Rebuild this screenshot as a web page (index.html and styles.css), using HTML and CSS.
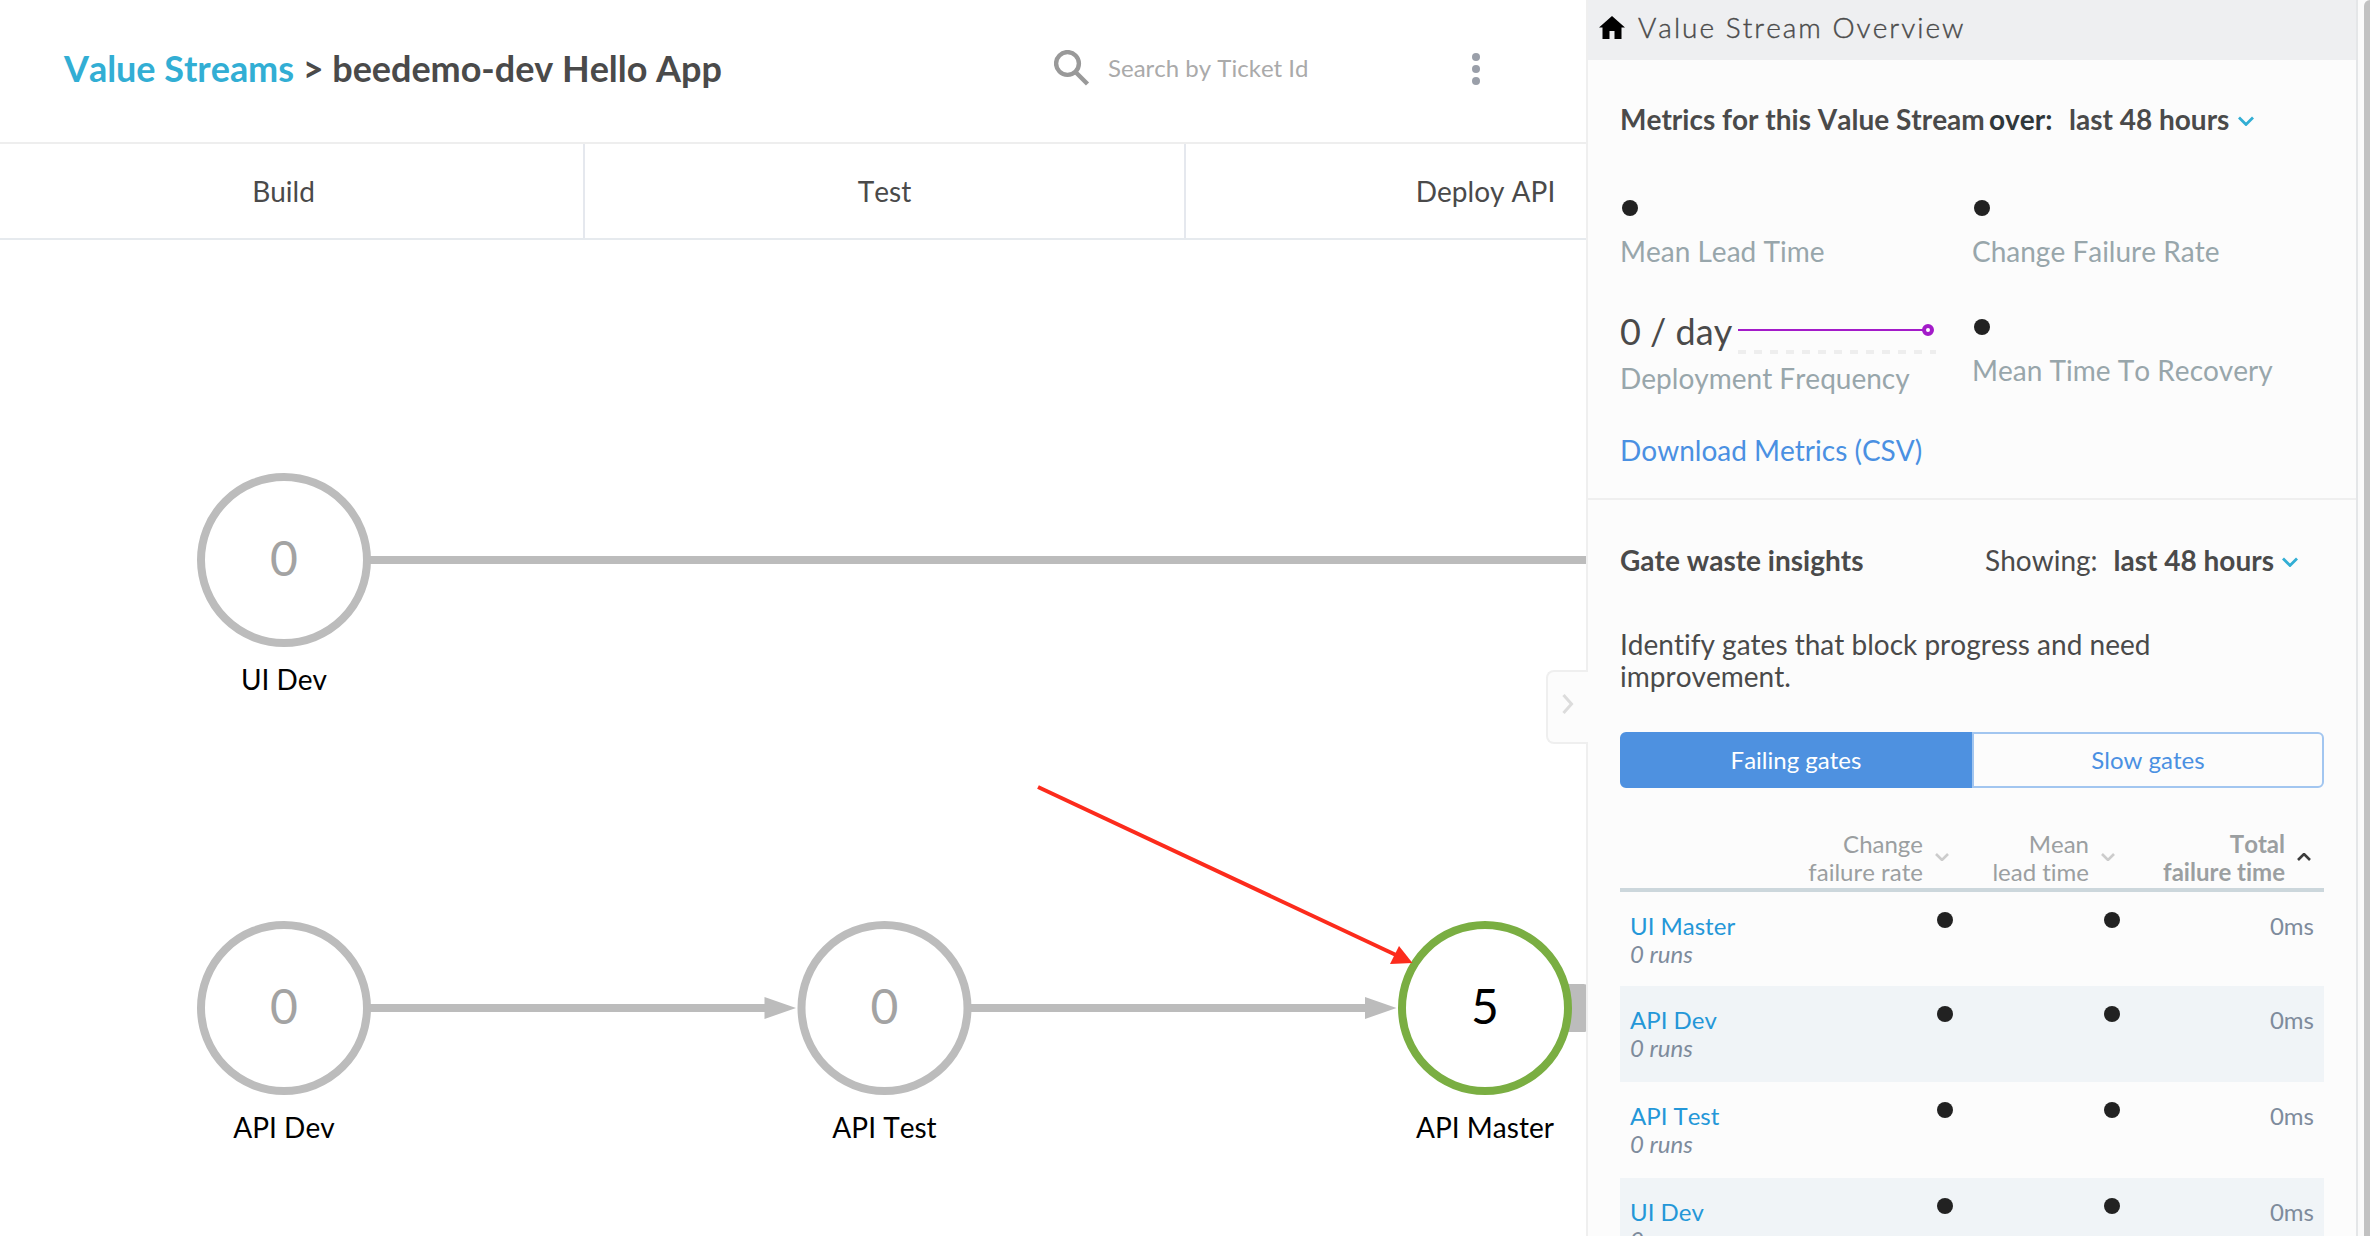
FILE: index.html
```html
<!DOCTYPE html>
<html lang="en">
<head>
<meta charset="utf-8">
<title>Value Streams - beedemo-dev Hello App</title>
<link rel="stylesheet" href="styles.css">
</head>
<body>
<div class="app">
  <main class="stream">
    <header class="topbar">
      <h1 class="title"><a class="title-link">Value Streams</a> &gt; beedemo-dev Hello App</h1>
      <div class="search">
        <svg class="search-icon" width="36" height="36" viewBox="0 0 36 36"><circle cx="13.5" cy="13.5" r="11.4"/><path d="M22 22.500L33.500 34"/></svg>
        <span class="search-text">Search by Ticket Id</span>
      </div>
      <svg class="kebab" width="8" height="32" viewBox="0 0 8 32"><circle cx="4" cy="4" r="4"/><circle cx="4" cy="16" r="4"/><circle cx="4" cy="28" r="4"/></svg>
    </header>
    <div class="phases">
      <div class="phase">Build</div>
      <div class="phase">Test</div>
      <div class="phase">Deploy API</div>
    </div>
    <svg class="canvas" width="1586" height="996" viewBox="0 240 1586 996">
      <g class="links">
        <path d="M284 560H1586M284 1008H766M884.500 1008H1366"/>
        <path class="head" d="M764.500 997L796 1008L764.500 1019ZM1365 997L1396.500 1008L1365 1019Z"/>
        <rect class="head" x="1520" y="984" width="67.500" height="48" rx="4"/>
      </g>
      <g class="node"><circle cx="284" cy="560" r="83"/><text class="count" x="284" y="575.500">0</text><text class="name" x="284" y="690">UI Dev</text></g>
      <g class="node"><circle cx="284" cy="1008" r="83"/><text class="count" x="284" y="1023.500">0</text><text class="name" x="284" y="1138">API Dev</text></g>
      <g class="node"><circle cx="884.500" cy="1008" r="83"/><text class="count" x="884.500" y="1023.500">0</text><text class="name" x="884.500" y="1138">API Test</text></g>
      <g class="node active"><circle cx="1485" cy="1008" r="83"/><text class="count" x="1485" y="1023.500">5</text><text class="name" x="1485" y="1138">API Master</text></g>
      <g class="pointer"><path class="shaft" d="M1038 787L1396 955"/><path class="tip" d="M1399 946L1412.500 963L1390 964Z"/></g>
    </svg>
  </main>
  <aside class="panel">
    <div class="handle"><svg width="12" height="20" viewBox="0 0 12 20"><path d="M1.500 1L9.500 10L1.500 19"/></svg></div>
    <div class="panel-head">
      <svg width="26" height="23" viewBox="0 0 26 23"><path d="M13 0L26 11.500H22.500V23H15.500V15H10.500V23H3.500V11.500H0Z"/></svg>
      <span>Value Stream Overview</span>
    </div>
    <section class="metrics">
      <h2 class="heading"><span class="subject">Metrics for this Value Stream</span><span class="over">over:</span><span class="range">last 48 hours</span><svg class="chev" width="16" height="10" viewBox="0 0 16 10"><path d="M1 1.500L8 8.500L15 1.500"/></svg></h2>
      <div class="grid">
        <div class="metric"><i class="dot"></i><span class="label">Mean Lead Time</span></div>
        <div class="metric"><i class="dot"></i><span class="label">Change Failure Rate</span></div>
        <div class="metric freq">
          <div class="value">0 / day
            <svg class="spark" width="200" height="36" viewBox="0 0 200 36"><path class="dash" d="M0 32H198"/><path class="line" d="M0 10H190"/><circle cx="190" cy="10" r="4"/></svg>
          </div>
          <span class="label">Deployment Frequency</span>
        </div>
        <div class="metric"><i class="dot"></i><span class="label">Mean Time To Recovery</span></div>
      </div>
      <a class="download">Download Metrics (CSV)</a>
    </section>
    <section class="gates">
      <div class="gates-head">
        <h2 class="heading">Gate waste insights</h2>
        <div class="showing"><span>Showing:</span><b>last 48 hours</b><svg class="chev" width="16" height="10" viewBox="0 0 16 10"><path d="M1 1.500L8 8.500L15 1.500"/></svg></div>
      </div>
      <p class="intro">Identify gates that block progress and need improvement.</p>
      <div class="toggle"><div class="tab on">Failing gates</div><div class="tab">Slow gates</div></div>
      <div class="thead">
        <span></span>
        <div class="th">Change<br>failure rate<svg width="14" height="8" viewBox="0 0 14 8"><path d="M1 1L7 7L13 1"/></svg></div>
        <div class="th">Mean<br>lead time<svg width="14" height="8" viewBox="0 0 14 8"><path d="M1 1L7 7L13 1"/></svg></div>
        <div class="th sorted">Total<br>failure time<svg width="14" height="8" viewBox="0 0 14 8"><path d="M1 7L7 1L13 7"/></svg></div>
      </div>
      <div class="rows">
        <div class="row"><div class="gate"><a>UI Master</a><em>0 runs</em></div><i class="dot"></i><i class="dot"></i><span class="total">0ms</span></div>
        <div class="row"><div class="gate"><a>API Dev</a><em>0 runs</em></div><i class="dot"></i><i class="dot"></i><span class="total">0ms</span></div>
        <div class="row"><div class="gate"><a>API Test</a><em>0 runs</em></div><i class="dot"></i><i class="dot"></i><span class="total">0ms</span></div>
        <div class="row"><div class="gate"><a>UI Dev</a><em>0 runs</em></div><i class="dot"></i><i class="dot"></i><span class="total">0ms</span></div>
      </div>
    </section>
  </aside>
  <div class="scroll"><div class="thumb"></div></div>
</div>
</body>
</html>
```
FILE: styles.css
```css
* { box-sizing: border-box; }
body { margin: 0; background: #fff; font-family: Lato, "Liberation Sans", sans-serif; font-size: 28px; font-kerning: none; font-variant-ligatures: none; color: #4a4a4a; }
svg { display: block; fill: none; }
h1, h2, p { margin: 0; }
.app { display: grid; grid-template-columns: 1586px 772px 12px; height: 1236px; overflow: hidden; }

.stream { display: flex; flex-direction: column; overflow: hidden; }
.topbar { display: flex; align-items: center; height: 144px; padding: 0 0 6px 64px; border-bottom: 2px solid #eee; }
.title { width: 990px; font-size: 36px; line-height: 44px; font-weight: 700; letter-spacing: -0.04px; }
.title-link { color: #32aed4; }
.search { display: flex; align-items: center; gap: 18px; width: 418px; }
.search-icon { stroke: #999; stroke-width: 4.4; }
.search-text { font-size: 24px; padding-bottom: 2px; color: #aaa; }
.kebab { fill: #9a9fa9; margin-top: 1px; }
.phases { display: flex; height: 96px; border-bottom: 2px solid #e6eaee; }
.phase { flex: 0 0 601px; display: flex; align-items: center; justify-content: center; padding-bottom: 1px; border-right: 2px solid #e5e8ee; }
.phase:first-child { flex-basis: 585px; padding-right: 16px; }
.canvas { flex: none; }
.links path { stroke: #bcbcbc; stroke-width: 8; }
.links .head { fill: #bcbcbc; stroke: none; }
.node circle { fill: #fff; stroke: #bcbcbc; stroke-width: 8; }
.node text { text-anchor: middle; }
.count { font-size: 48px; fill: #a3a3a3; }
.name { font-size: 28px; fill: #000; }
.active circle { stroke: #7aae42; }
.active .count { fill: #000; }
.shaft { stroke: #fc2b1c; stroke-width: 4; }
.tip { fill: #fc2b1c; }

.panel { position: relative; background: #fcfcfc; border-left: 2px solid #efefef; border-right: 2px solid #e4e6e8; }
.handle { position: absolute; left: -42px; top: 670px; width: 42px; height: 74px; display: flex; align-items: center; padding: 0 0 6px 14px; background: #fcfcfc; border: 2px solid #efefef; border-right: 0; border-radius: 8px 0 0 8px; }
.handle svg { stroke: #dcdcdc; stroke-width: 3; }
.panel-head { display: flex; align-items: center; gap: 13px; height: 60px; padding: 0 0 5px 11px; background: #eeeff1; font-weight: 300; letter-spacing: 2px; }
.panel-head span { padding-bottom: 1px; -webkit-text-stroke: 0.4px #4a4a4a; }
.panel-head svg { fill: #000; }
.metrics { height: 440px; padding: 43px 32px 0; border-bottom: 2px solid #efefef; }
.heading { display: flex; align-items: center; font-size: 28px; line-height: 32px; height: 32px; font-weight: 700; }
.subject { width: 369px; }
.over { color: #30383b; width: 80px; }
.range { margin-right: 9px; }
.chev { stroke: #32aed4; stroke-width: 2.8; margin-top: 4px; }
.grid { display: grid; grid-template-columns: 352px 352px; grid-template-rows: 119px 126px; padding-top: 65px; }
.dot { display: block; width: 16px; height: 16px; border-radius: 50%; background: #222; }
.metric .dot { margin-left: 2px; }
.label { display: block; margin-top: 18px; line-height: 34px; color: #98a6ab; }
.value { display: flex; font-size: 36px; line-height: 44px; height: 44px; margin-top: -10px; white-space: nowrap; }
.value .spark { margin: 11px 0 0 6px; }
.freq .label { margin-top: 8px; }
.spark .line { stroke: #a31bc9; stroke-width: 2.2; }
.spark .dash { stroke: #eee; stroke-width: 4; stroke-dasharray: 8 8; }
.spark circle { fill: #fff; stroke: #a31bc9; stroke-width: 4; }
.download { display: block; line-height: 34px; color: #4a90e2; margin-top: -12px; }

.gates { padding: 44px 32px 0; }
.gates-head { display: flex; justify-content: space-between; height: 32px; padding-right: 26px; }
.showing { display: flex; align-items: center; line-height: 32px; }
.showing b { margin: 0 8px 0 16px; }
.intro { margin-top: 52px; width: 600px; line-height: 32px; }
.toggle { display: flex; height: 56px; width: 704px; margin-top: 40px; font-size: 24px; }
.tab { flex: 1; display: flex; align-items: center; justify-content: center; padding-bottom: 2px; color: #4a90e2; border: 2px solid #a2c6f0; border-radius: 0 6px 6px 0; }
.on { background: #4e91e0; color: #fff; border-color: #4e91e0; border-radius: 6px 0 0 6px; }
.thead { display: grid; grid-template-columns: 136px 193px 166px 196px; width: 704px; height: 62px; margin-top: 42px; border-bottom: 4px solid #ccd7dc; font-size: 24px; line-height: 28px; }
.th { position: relative; text-align: right; padding-right: 26px; color: #9b9fa1; }
.th svg { position: absolute; right: 0; top: 23px; stroke: #ccc; stroke-width: 2.6; }
.th.sorted { font-weight: 700; }
.th.sorted svg { stroke: #3c3c3c; }
.row { display: grid; grid-template-columns: 317px 167px 120px 100px; width: 704px; height: 96px; padding-top: 20px; font-size: 24px; line-height: 28px; }
.row:first-child { height: 94px; }
.row:nth-child(even) { background: #f0f4f7; }
.gate { display: flex; flex-direction: column; padding-left: 10px; }
.gate a { color: #2497d8; }
.gate em { color: #7e8b9c; }
.total { text-align: right; padding-right: 10px; color: #7e8b9c; }
.scroll { background: #fafafa; padding-left: 6px; }
.thumb { height: 1236px; background: #c1c1c1; border-radius: 6px 0 0 0; }
```
